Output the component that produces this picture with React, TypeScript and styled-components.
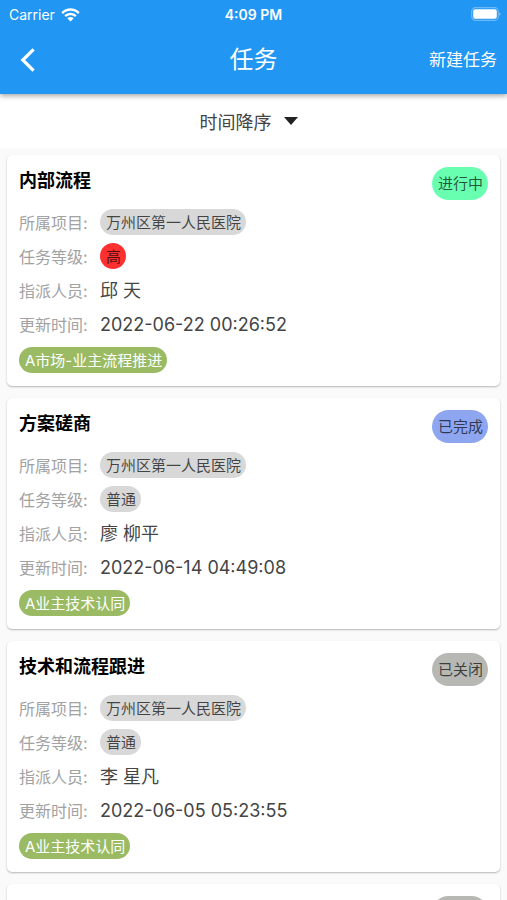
import React from "react";
import styled, { createGlobalStyle } from "styled-components";

const GlobalStyle = createGlobalStyle`
  *, *::before, *::after { box-sizing: border-box; }
  body {
    margin: 0;
    background: #fafafa;
    color: #444444;
    font-family: Inter, "Noto Sans CJK SC", sans-serif;
  }
  h1, h2, dl, dt, dd, ul { margin: 0; padding: 0; }
  button { border: 0; background: none; padding: 0; font: inherit; color: inherit; cursor: pointer; }
`;

const Screen = styled.div`
  display: flex;
  flex-direction: column;
  height: 100vh;
  overflow: hidden;
`;

const Header = styled.header`
  flex: none;
  position: relative;
  z-index: 1;
  color: #ffffff;
  background: #2196f3;
  box-shadow: 0 2px 5px rgba(0, 0, 0, 0.35);
`;

const StatusBar = styled.div`
  display: grid;
  grid-template-columns: 1fr auto 1fr;
  align-items: center;
  height: 26px;
  padding: 0 6px;
  font-size: 14px;
  line-height: 26px;
`;

const Carrier = styled.span`
  display: flex;
  align-items: center;
  gap: 6px;
  padding: 2px 0 0 3px;
`;

const Clock = styled.time`
  padding-top: 2px;
  font-size: 14px;
  font-weight: 600;
`;

const Battery = styled.svg`
  justify-self: end;
`;

const NavBar = styled.nav`
  display: grid;
  grid-template-columns: 1fr auto 1fr;
  align-items: center;
  height: 68px;
  padding: 0 10px;
`;

const BackButton = styled.button`
  display: flex;
  justify-self: start;
  padding: 0 6px;
`;

const PageTitle = styled.h1`
  font-size: 24px;
  line-height: 32px;
  font-weight: 400;
`;

const CreateButton = styled.button`
  justify-self: end;
  font-size: 17px;
  line-height: 24px;
`;

const SortBar = styled.div`
  flex: none;
  display: flex;
  justify-content: center;
  height: 54px;
  padding-right: 10px;
  background: #ffffff;
`;

const SortButton = styled.button`
  display: flex;
  align-items: center;
  gap: 12px;
  font-size: 18px;
`;

const TaskList = styled.ul`
  flex: 1;
  min-height: 0;
  display: flex;
  flex-direction: column;
  gap: 12px;
  padding: 7px;
  list-style: none;
  overflow-y: auto;
  scrollbar-width: none;
`;

const Card = styled.li`
  flex: none;
  padding: 12px 12px 13px;
  background: #ffffff;
  border-radius: 5px;
  box-shadow: 0 1px 2px rgba(0, 0, 0, 0.28);
`;

const CardHeader = styled.div`
  display: flex;
  justify-content: space-between;
  align-items: flex-start;
  height: 38px;
`;

const TaskTitle = styled.h2`
  color: #000000;
  font-size: 18px;
  line-height: 28px;
  font-weight: 700;
`;

const Status = styled.span<{ $color: string }>`
  padding: 0 5px 0 6px;
  border-radius: 17px;
  background: ${({ $color }) => $color};
  color: rgba(0, 0, 0, 0.68);
  font-size: 15px;
  line-height: 33px;
`;

const Field = styled.div`
  display: flex;
  align-items: center;
  height: 34px;
`;

const Label = styled.dt`
  flex: none;
  width: 81px;
  color: #a2a2a2;
  font-size: 16px;
`;

const Value = styled.dd`
  font-size: 18px;
  line-height: 26px;
`;

const TextValue = styled(Value)`
  padding-top: 2px;
`;

const Pill = styled.span<{ $color: string; $text?: string }>`
  display: block;
  width: fit-content;
  padding: 2px 5px 0 6px;
  border-radius: 13px;
  background: ${({ $color }) => $color};
  color: ${({ $text }) => $text ?? "rgba(0, 0, 0, 0.7)"};
  font-size: 15px;
  line-height: 24px;
`;

const Tags = styled.div`
  display: flex;
  padding-top: 6px;
`;

type StatusName = "进行中" | "已完成" | "已关闭";

const statusColors: Record<StatusName, string> = {
  进行中: "#69ffb0",
  已完成: "#8ea6f0",
  已关闭: "#b7b8b4",
};

const levelColors: Record<string, string> = { 高: "#ff3030", 普通: "#d8d8d8" };

interface Task {
  title: string;
  status: StatusName;
  project: string;
  level: string;
  person: string;
  updated: string;
  tag: string;
}

const project = "万州区第一人民医院";

const tasks: Task[] = [
  { title: "内部流程", status: "进行中", project, level: "高", person: "邱 天", updated: "2022-06-22 00:26:52", tag: "A市场-业主流程推进" },
  { title: "方案磋商", status: "已完成", project, level: "普通", person: "廖 柳平", updated: "2022-06-14 04:49:08", tag: "A业主技术认同" },
  { title: "技术和流程跟进", status: "已关闭", project, level: "普通", person: "李 星凡", updated: "2022-06-05 05:23:55", tag: "A业主技术认同" },
  { title: "", status: "已关闭", project, level: "普通", person: "", updated: "", tag: "A业主技术认同" },
];

function TaskCard({ task }: { task: Task }) {
  return (
    <Card>
      <CardHeader>
        <TaskTitle>{task.title}</TaskTitle>
        <Status $color={statusColors[task.status]}>{task.status}</Status>
      </CardHeader>
      <dl>
        <Field>
          <Label>所属项目:</Label>
          <Value><Pill $color="#d8d8d8">{task.project}</Pill></Value>
        </Field>
        <Field>
          <Label>任务等级:</Label>
          <Value><Pill $color={levelColors[task.level]}>{task.level}</Pill></Value>
        </Field>
        <Field>
          <Label>指派人员:</Label>
          <TextValue>{task.person}</TextValue>
        </Field>
        <Field>
          <Label>更新时间:</Label>
          <TextValue>{task.updated}</TextValue>
        </Field>
      </dl>
      <Tags>
        <Pill $color="#9abb63" $text="#ffffff">{task.tag}</Pill>
      </Tags>
    </Card>
  );
}

export default function App() {
  return (
    <Screen>
      <GlobalStyle />
      <Header>
        <StatusBar>
          <Carrier>
            Carrier
            <svg width="19" height="14" viewBox="0 0 19 14" fill="#fff" aria-hidden="true">
              <path d="M0.3 4.3C5.4-1 13.6-1 18.7 4.3L17 6C12.8 1.8 6.2 1.8 2 6Z" />
              <path d="M3.3 7.3C6.8 3.8 12.2 3.8 15.7 7.3L14 9C11.5 6.5 7.5 6.5 5 9Z" />
              <path d="M6.3 10.3C8.1 8.6 10.9 8.6 12.7 10.3L9.5 13.5Z" />
            </svg>
          </Carrier>
          <Clock>4:09 PM</Clock>
          <Battery width="30" height="14" viewBox="0 0 30 14" aria-hidden="true">
            <rect x="0.7" y="0.7" width="26.6" height="12.6" rx="3.8" fill="none" stroke="#fff" strokeOpacity="0.35" strokeWidth="1.2" />
            <rect x="2.2" y="2.2" width="23.6" height="9.6" rx="2" fill="#fff" />
            <path d="M28.4 5.2C29.9 5.8 29.9 8.2 28.4 8.8Z" fill="#fff" fillOpacity="0.5" />
          </Battery>
        </StatusBar>
        <NavBar>
          <BackButton aria-label="返回">
            <svg width="24" height="26" viewBox="0 0 24 26" fill="none" stroke="#fff" strokeWidth="3.2" aria-hidden="true">
              <path d="M17.6 2.3L6.8 13L17.6 23.7" />
            </svg>
          </BackButton>
          <PageTitle>任务</PageTitle>
          <CreateButton>新建任务</CreateButton>
        </NavBar>
      </Header>
      <SortBar>
        <SortButton>
          时间降序
          <svg width="14" height="8" viewBox="0 0 14 8" fill="#222" aria-hidden="true">
            <path d="M0 0H14L7 8Z" />
          </svg>
        </SortButton>
      </SortBar>
      <TaskList>
        {tasks.map((task, index) => (
          <TaskCard key={index} task={task} />
        ))}
      </TaskList>
    </Screen>
  );
}
